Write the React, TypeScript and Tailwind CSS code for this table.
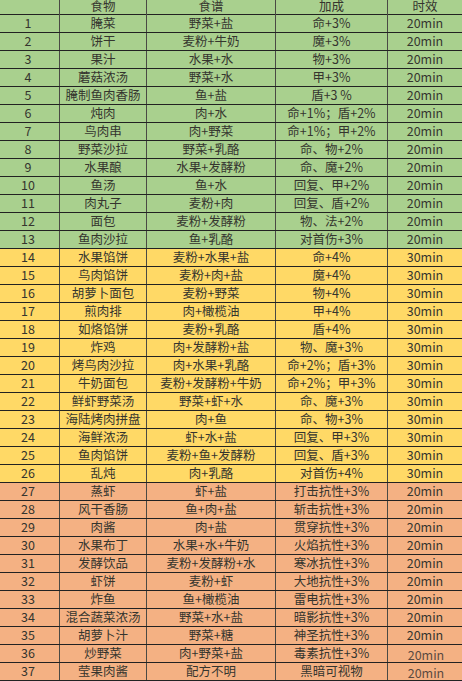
import React from "react";

type Row = [string, string, string, string, string];

const rows: Row[] = [
  ["1", "腌菜", "野菜+盐", "命+3%", "20min"],
  ["2", "饼干", "麦粉+牛奶", "魔+3%", "20min"],
  ["3", "果汁", "水果+水", "物+3%", "20min"],
  ["4", "蘑菇浓汤", "野菜+水", "甲+3%", "20min"],
  ["5", "腌制鱼肉香肠", "鱼+盐", "盾+3 %", "20min"],
  ["6", "炖肉", "肉+水", "命+1%；盾+2%", "20min"],
  ["7", "鸟肉串", "肉+野菜", "命+1%；甲+2%", "20min"],
  ["8", "野菜沙拉", "野菜+乳酪", "命、物+2%", "20min"],
  ["9", "水果酿", "水果+发酵粉", "命、魔+2%", "20min"],
  ["10", "鱼汤", "鱼+水", "回复、甲+2%", "20min"],
  ["11", "肉丸子", "麦粉+肉", "回复、盾+2%", "20min"],
  ["12", "面包", "麦粉+发酵粉", "物、法+2%", "20min"],
  ["13", "鱼肉沙拉", "鱼+乳酪", "对首伤+3%", "20min"],
  ["14", "水果馅饼", "麦粉+水果+盐", "命+4%", "30min"],
  ["15", "鸟肉馅饼", "麦粉+肉+盐", "魔+4%", "30min"],
  ["16", "胡萝卜面包", "麦粉+野菜", "物+4%", "30min"],
  ["17", "煎肉排", "肉+橄榄油", "甲+4%", "30min"],
  ["18", "如烙馅饼", "麦粉+乳酪", "盾+4%", "30min"],
  ["19", "炸鸡", "肉+发酵粉+盐", "物、魔+3%", "30min"],
  ["20", "烤鸟肉沙拉", "肉+水果+乳酪", "命+2%；盾+3%", "30min"],
  ["21", "牛奶面包", "麦粉+发酵粉+牛奶", "命+2%；甲+3%", "30min"],
  ["22", "鲜虾野菜汤", "野菜+虾+水", "命、魔+3%", "30min"],
  ["23", "海陆烤肉拼盘", "肉+鱼", "命、物+3%", "30min"],
  ["24", "海鲜浓汤", "虾+水+盐", "回复、甲+3%", "30min"],
  ["25", "鱼肉馅饼", "麦粉+鱼+发酵粉", "回复、盾+3%", "30min"],
  ["26", "乱炖", "肉+乳酪", "对首伤+4%", "30min"],
  ["27", "蒸虾", "虾+盐", "打击抗性+3%", "20min"],
  ["28", "风干香肠", "鱼+肉+盐", "斩击抗性+3%", "20min"],
  ["29", "肉酱", "肉+盐", "贯穿抗性+3%", "20min"],
  ["30", "水果布丁", "水果+水+牛奶", "火焰抗性+3%", "20min"],
  ["31", "发酵饮品", "麦粉+发酵粉+水", "寒冰抗性+3%", "20min"],
  ["32", "虾饼", "麦粉+虾", "大地抗性+3%", "20min"],
  ["33", "炸鱼", "鱼+橄榄油", "雷电抗性+3%", "20min"],
  ["34", "混合蔬菜浓汤", "野菜+水+盐", "暗影抗性+3%", "20min"],
  ["35", "胡萝卜汁", "野菜+糖", "神圣抗性+3%", "20min"],
  ["36", "炒野菜", "肉+野菜+盐", "毒素抗性+3%", "20min"],
  ["37", "莹果肉酱", "配方不明", "黑暗可视物", "20min"],
];

const bgFor = (i: number) =>
  i < 13 ? "bg-[#a9d08e]" : i < 26 ? "bg-[#ffd966]" : "bg-[#f4b183]";

const cols = "grid grid-cols-[60px_87px_129px_112px_74px]";
const cell =
  "flex items-center justify-center border-r border-[#4a4a44] whitespace-nowrap";

export default function App() {
  return (
    <div
      className="w-[462px] h-[681px] overflow-hidden bg-white text-[#35352e] text-[12.5px]"
      style={{ fontFamily: '"Noto Sans CJK SC", "Noto Sans", sans-serif' }}
    >
      <div
        className={`${cols} h-[15px] bg-[#a9d08e] border-b border-[#222]`}
        style={{ fontFamily: '"Liberation Sans", "Noto Sans CJK SC", sans-serif' }}
      >
        {["", "食物", "食谱", "加成", "时效"].map((t, j) => (
          <div
            key={j}
            className={`flex items-start justify-center leading-[14.5px] whitespace-nowrap ${
              j < 4 ? "border-r border-[#4a4a44]" : ""
            }`}
          >
            {t}
          </div>
        ))}
      </div>
      {rows.map((r, i) => (
        <div
          key={i}
          className={`${cols} h-[18px] border-b border-[#222] leading-none ${bgFor(i)}`}
        >
          <div className={`${cell} pr-[3px]`}>{r[0]}</div>
          <div className={cell}>{r[1]}</div>
          <div className={cell}>{r[2]}</div>
          <div className={cell}>{r[3]}</div>
          <div
            className={`flex items-center justify-center whitespace-nowrap ${
              i >= 35 ? "pt-[3px] pl-[2px] text-[#5a4a40]" : ""
            }`}
          >
            {r[4]}
          </div>
        </div>
      ))}
    </div>
  );
}
